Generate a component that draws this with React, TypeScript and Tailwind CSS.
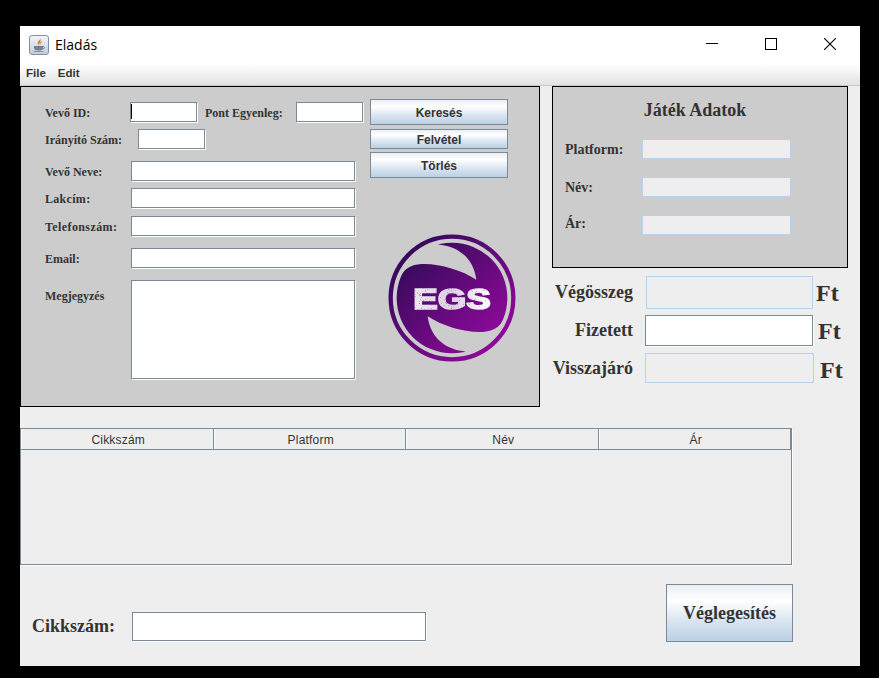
import React from 'react';

const serif = "font-['Liberation_Serif',serif] font-bold text-[#333333]";
const fieldWhite =
  'block bg-white border border-[#7a8a99] shadow-[1px_1px_0_#ffffff] outline-none';
const fieldOff = 'block bg-[#eeeeee] border border-[#b9d1e9] outline-none';
const btn =
  "block w-[138px] pt-[1px] border border-[#7a8a99] bg-[linear-gradient(180deg,#e9eff5_0%,#ffffff_28%,#dbe6f1_62%,#bbd0e5_100%)] font-['Liberation_Sans',sans-serif] font-bold text-[12px] text-[#333333]";

const Field = ({ className }: { className: string }) => (
  <input readOnly tabIndex={-1} className={`${fieldWhite} ${className}`} />
);

const Label = ({ text, className = '' }: { text: string; className?: string }) => (
  <span className={`${serif} text-[12px] leading-[20px] pt-[1px] ${className}`}>{text}</span>
);

const FormRow = ({ label, mt, spacing = '' }: { label: string; mt: string; spacing?: string }) => (
  <div className={`flex items-center h-[20px] ${mt}`}>
    <Label text={label} className={`w-[86px] shrink-0 ${spacing}`} />
    <Field className="w-[224px] h-[20px]" />
  </div>
);

const JavaIcon = () => (
  <svg width="20" height="20" viewBox="0 0 20 20" aria-hidden>
    <defs>
      <linearGradient id="ji" x1="0" y1="0" x2="0" y2="1">
        <stop offset="0" stopColor="#f4f6f9" />
        <stop offset="1" stopColor="#c3ccd6" />
      </linearGradient>
    </defs>
    <rect x="0.5" y="0.5" width="19" height="19" rx="2.5" fill="url(#ji)" stroke="#7f91a3" />
    <path d="M11 3c1 2-3 3-2 6 .3 1 1 1.500 1 1.500-1-2 3-3.500 1-7.500z" fill="#d9722a" />
    <path d="M13 6c-2 1-3 2-2 4.500 0-2 2-3 2-4.500z" fill="#e58a3c" />
    <path d="M5 11h9v1.500c0 2-1.500 3-3 3H8c-1.500 0-3-1-3-3z" fill="#6f8296" />
    <path d="M14 11.500c2 0 2 2.500-.5 2.500" fill="none" stroke="#6f8296" />
    <path d="M4.500 16.500h10" stroke="#8799ab" />
  </svg>
);

const MinimizeIcon = () => (
  <svg width="12" height="12" viewBox="0 0 12 12" aria-hidden>
    <path d="M0 5.500h12" stroke="#000000" shapeRendering="crispEdges" />
  </svg>
);

const MaximizeIcon = () => (
  <svg width="12" height="12" viewBox="0 0 12 12" aria-hidden>
    <rect x="0.5" y="0.5" width="11" height="11" fill="none" stroke="#000000" shapeRendering="crispEdges" />
  </svg>
);

const CloseIcon = () => (
  <svg width="12" height="12" viewBox="0 0 12 12" aria-hidden>
    <path d="M0 0L12 12M12 0L0 12" stroke="#000000" strokeWidth="1.100" />
  </svg>
);

const Logo = () => (
  <svg width="128" height="128" viewBox="40 28 384 384" className="block" aria-label="EGS logo">
    <defs>
      <linearGradient id="lg" x1="0.1" y1="0.1" x2="0.9" y2="0.9">
        <stop offset="0" stopColor="#330a58" />
        <stop offset="1" stopColor="#920a9c" />
      </linearGradient>
      <linearGradient id="tx" x1="0" y1="0" x2="1" y2="0">
        <stop offset="0" stopColor="#efe9f1" />
        <stop offset="0.5" stopColor="#dccfe2" />
        <stop offset="1" stopColor="#ffffff" />
      </linearGradient>
      {/* grainy wear on the letters */}
      <filter id="grain" x="0" y="0" width="100%" height="100%">
        <feTurbulence type="fractalNoise" baseFrequency="0.5" numOctaves="2" seed="4" result="n" />
        <feColorMatrix
          in="n"
          type="matrix"
          values="0 0 0 0 0  0 0 0 0 0  0 0 0 0 0  0 0 0 -3 2.900"
          result="m"
        />
        <feComposite in="SourceGraphic" in2="m" operator="in" />
      </filter>
    </defs>
    <circle cx="232" cy="220" r="166" fill="url(#lg)" />
    <path
      d="M195 60C250 65 297 100 305 165C260 135 190 115 140 118C110 120 88 130 72 165L40 140L120 30z"
      fill="#cccccc"
    />
    <path
      d="M195 60C250 65 297 100 305 165C260 135 190 115 140 118C110 120 88 130 72 165L40 140L120 30z"
      fill="#cccccc"
      transform="rotate(180 232 220)"
    />
    <circle cx="232" cy="220" r="184" fill="none" stroke="url(#lg)" strokeWidth="13" />
    <text
      x="116"
      y="253"
      textLength="232"
      lengthAdjust="spacingAndGlyphs"
      fill="url(#tx)"
      stroke="url(#tx)"
      strokeWidth="5"
      fontFamily="'Liberation Sans', sans-serif"
      fontWeight="bold"
      fontSize="86"
      filter="url(#grain)"
    >
      EGS
    </text>
  </svg>
);

const CustomerPanel = () => (
  <div className="flex w-[520px] h-[321px] border border-black bg-[#cccccc]">
    <div className="w-[342px] pl-[24px] pt-[15px] shrink-0">
      <div className="flex items-center h-[20px]">
        <Label text="Vevő ID:" className="w-[85px] shrink-0" />
        <div className="relative">
          <Field className="w-[67px] h-[20px]" />
          <span className="absolute left-[1px] top-[2px] w-px h-[15px] bg-black" />
        </div>
        <Label text="Pont Egyenleg:" className="ml-[8px] w-[91px] shrink-0" />
        <Field className="w-[67px] h-[20px]" />
      </div>
      <div className="flex items-center h-[20px] mt-[7px]">
        <Label text="Irányító Szám:" className="w-[93px] shrink-0" />
        <Field className="w-[67px] h-[20px]" />
      </div>
      <FormRow label="Vevő Neve:" mt="mt-[12px]" />
      <FormRow label="Lakcím:" mt="mt-[7px]" spacing="tracking-[0.3px]" />
      <FormRow label="Telefonszám:" mt="mt-[8px]" spacing="tracking-[0.4px]" />
      <FormRow label="Email:" mt="mt-[12px]" />
      <div className="flex items-start mt-[12px]">
        <Label text="Megjegyzés" className="w-[86px] shrink-0 mt-[5px]" />
        <Field className="w-[224px] h-[99px]" />
      </div>
    </div>
    <div className="ml-[7px] pt-[12px]">
      <button className={`${btn} h-[26px]`}>Keresés</button>
      <button className={`${btn} h-[20px] mt-[4px]`}>Felvétel</button>
      <button className={`${btn} h-[26px] mt-[3px]`}>Törlés</button>
      <div className="ml-[18px] mt-[56px]">
        <Logo />
      </div>
    </div>
  </div>
);

const GameRow = ({ label, mt, lift = '' }: { label: string; mt: string; lift?: string }) => (
  <div className={`flex items-center h-[20px] ${mt}`}>
    <span className={`${serif} text-[14px] w-[77px] shrink-0 ${lift}`}>{label}</span>
    <div className={`${fieldOff} w-[149px] h-[20px]`} />
  </div>
);

const GamePanel = () => (
  <div className="w-[296px] h-[182px] border border-black bg-[#cccccc] pl-[12px]">
    <div className={`${serif} text-[18px] leading-[20px] text-center pt-[13px] w-[260px] h-[52px]`}>
      Játék Adatok
    </div>
    <GameRow label="Platform:" mt="" />
    <GameRow label="Név:" mt="mt-[18px]" />
    <GameRow label="Ár:" mt="mt-[18px]" lift="pb-[4px]" />
  </div>
);

const Totals = () => (
  <div className="mt-[8px]">
    <div className="flex items-center h-[33px] pl-[3px]">
      <span className={`${serif} text-[18px] w-[91px] shrink-0`}>Végösszeg</span>
      <div className={`${fieldOff} w-[167px] h-[33px]`} />
      <span className={`${serif} text-[24px] ml-[3px]`}>Ft</span>
    </div>
    <div className="flex items-center h-[31px] mt-[6px]">
      <span className={`${serif} text-[18px] w-[93px] shrink-0 text-right pr-[12px]`}>Fizetett</span>
      <Field className="w-[168px] h-[31px]" />
      <span className={`${serif} text-[24px] ml-[5px]`}>Ft</span>
    </div>
    <div className="flex items-center h-[30px] mt-[7px]">
      <span className={`${serif} text-[18px] w-[93px] shrink-0 text-right pr-[12px]`}>Visszajáró</span>
      <div className={`${fieldOff} w-[169px] h-[30px]`} />
      <span className={`${serif} text-[24px] ml-[6px] pt-[3px]`}>Ft</span>
    </div>
  </div>
);

const columns = ['Cikkszám', 'Platform', 'Név', 'Ár'];

const ItemsTable = () => (
  <div className="mt-[21px] w-[772px] h-[137px] border border-[#7a8a99] shadow-[1px_1px_0_#ffffff]">
    <div className="grid grid-cols-4 h-[21px] border-b border-[#7a8a99]">
      {columns.map((c) => (
        <div
          key={c}
          className="flex items-center justify-center pl-[2px] pt-[1px] border-r border-[#7a8a99] border-l-white border-l font-['Liberation_Sans',sans-serif] text-[12px] tracking-[0.2px] text-[#333333]"
        >
          {c}
        </div>
      ))}
    </div>
  </div>
);

export default function App() {
  return (
    <div className="w-[879px] h-[678px] bg-black pt-[26px] pl-[20px] overflow-hidden">
      <div className="w-[840px] h-[640px] flex flex-col">
        <div className="flex items-center h-[38px] pb-[2px] bg-white shrink-0">
          <div className="ml-[9px] mt-[2px]">
            <JavaIcon />
          </div>
          <span className="ml-[6px] font-['Open_Sans',sans-serif] text-[14px] text-black">Eladás</span>
          <div className="ml-auto mr-[1px] flex">
            <div className="w-[59px] flex justify-center">
              <MinimizeIcon />
            </div>
            <div className="w-[59px] flex justify-center">
              <MaximizeIcon />
            </div>
            <div className="w-[59px] flex justify-center">
              <CloseIcon />
            </div>
          </div>
        </div>
        <div className="flex items-center gap-[12px] h-[22px] pl-[6px] pb-[2px] shrink-0 border-b border-[#c8c8c8] bg-[linear-gradient(180deg,#ffffff_0%,#e2e2e2_100%)] font-['Liberation_Sans',sans-serif] font-bold text-[11.5px] text-[#333333]">
          <span>File</span>
          <span>Edit</span>
        </div>
        <div className="flex-1 bg-[#eeeeee]">
          <div className="flex items-start h-[321px]">
            <CustomerPanel />
            <div className="ml-[12px]">
              <GamePanel />
              <Totals />
            </div>
          </div>
          <ItemsTable />
          <div className="flex items-end mt-[19px]">
            <div className="flex items-center pl-[12px] mb-[1px]">
              <span className={`${serif} text-[18px] w-[100px] shrink-0`}>Cikkszám:</span>
              <Field className="w-[294px] h-[29px]" />
            </div>
            <button
              className={`ml-[240px] w-[127px] h-[58px] border border-[#7a8a99] bg-[linear-gradient(180deg,#e9eff5_0%,#ffffff_28%,#dbe6f1_62%,#bbd0e5_100%)] ${serif} text-[18px]`}
            >
              Véglegesítés
            </button>
          </div>
        </div>
      </div>
    </div>
  );
}
